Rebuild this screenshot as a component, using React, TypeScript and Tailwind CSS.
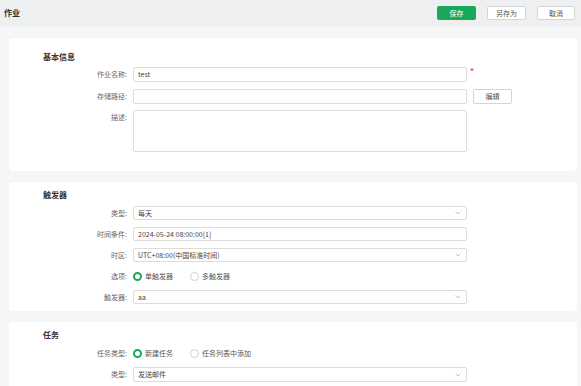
import React from "react";

const font = { fontFamily: '"Noto Sans CJK SC", "Noto Sans", sans-serif' };

const Chevron: React.FC = () => (
  <svg width="6" height="4" viewBox="0 0 6 4" className="absolute right-[5px] top-1/2 -translate-y-1/2">
    <path d="M0.5 0.5 L3 3 L5.5 0.5" fill="none" stroke="#b5b5b5" strokeWidth="0.8" />
  </svg>
);

const Field: React.FC<{ value?: string; select?: boolean; h?: string }> = ({ value, select, h = "h-[15px]" }) => (
  <div className={`relative shrink-0 w-[334px] ${h} border border-[#dcdcdc] rounded-[2px] bg-white flex items-center pl-[4px] text-[7px] text-[#444]`}>
    {value}
    {select && <Chevron />}
  </div>
);

const Row: React.FC<{ label: string; children: React.ReactNode; top?: boolean }> = ({ label, children, top }) => (
  <div className={`flex ${top ? "items-start" : "items-center"} gap-[6px]`}>
    <div className={`w-[118px] shrink-0 text-right text-[7px] text-[#666] ${top ? "pt-[2px]" : ""}`}>{label}</div>
    {children}
  </div>
);

const Radio: React.FC<{ checked?: boolean; label: string }> = ({ checked, label }) => (
  <div className="flex items-center gap-[3px] w-[57px] shrink-0">
    {checked ? (
      <span className="shrink-0 w-[9px] h-[9px] rounded-full border-2 border-[#1aa85a] bg-white" />
    ) : (
      <span className="shrink-0 w-[9px] h-[9px] rounded-full border border-[#d0d0d0] bg-white" />
    )}
    <span className="text-[7px] text-[#555] whitespace-nowrap">{label}</span>
  </div>
);

const Heading: React.FC<{ text: string }> = ({ text }) => (
  <div className="pl-[34px] text-[8px] font-semibold text-[#333] leading-[12px]">{text}</div>
);

export default function App() {
  return (
    <div style={font} className="w-[581px] h-[386px] overflow-hidden bg-[#f5f6f8]">
      {/* header */}
      <div className="h-[26px] bg-[#eeeff1] flex items-center justify-between pl-[4px] pr-[6px]">
        <span className="text-[8px] font-semibold text-[#333]">作业</span>
        <div className="flex gap-[11px]">
          <button className="w-[39px] h-[14px] rounded-[2px] bg-[#1aa85a] text-white text-[7px]">保存</button>
          <button className="w-[39px] h-[14px] rounded-[2px] bg-white border border-[#d4d4d4] text-[#555] text-[7px]">另存为</button>
          <button className="w-[38px] h-[14px] rounded-[2px] bg-white border border-[#d4d4d4] text-[#555] text-[7px]">取消</button>
        </div>
      </div>

      <div className="pl-[9px] pr-[4px] pt-[12px] flex flex-col gap-[11px]">
        {/* 基本信息 */}
        <div className="bg-white rounded-[3px] h-[133px] pt-[13px] flex flex-col">
          <Heading text="基本信息" />
          <div className="mt-[4px] flex flex-col gap-[7px]">
            <Row label="作业名称:">
              <Field value="test" />
              <span className="self-start -ml-[3px] text-[8px] leading-[8px] font-bold text-[#f03e3e]">*</span>
            </Row>
            <Row label="存储路径:">
              <Field />
              <button className="w-[39px] h-[15px] rounded-[2px] bg-white border border-[#d4d4d4] text-[#555] text-[7px]">编辑</button>
            </Row>
            <div className="-mt-[1px]">
              <Row label="描述:" top>
                <Field h="h-[42px]" />
              </Row>
            </div>
          </div>
        </div>

        {/* 触发器 */}
        <div className="bg-white rounded-[3px] h-[129px] pt-[7px] flex flex-col">
          <Heading text="触发器" />
          <div className="mt-[5px] flex flex-col gap-[7px]">
            <Row label="类型:">
              <Field value="每天" select h="h-[14px]" />
            </Row>
            <Row label="时间条件:">
              <Field value="2024-05-24 08:00:00[1]" h="h-[14px]" />
            </Row>
            <Row label="时区:">
              <Field value="UTC+08:00(中国标准时间)" select h="h-[14px]" />
            </Row>
            <Row label="选项:">
              <div className="h-[14px] flex items-center">
                <Radio checked label="单触发器" />
                <Radio label="多触发器" />
              </div>
            </Row>
            <Row label="触发器:">
              <Field value="aa" select h="h-[14px]" />
            </Row>
          </div>
        </div>

        {/* 任务 */}
        <div className="bg-white rounded-[3px] h-[80px] pt-[7px] flex flex-col">
          <Heading text="任务" />
          <div className="mt-[5px] flex flex-col gap-[7px]">
            <Row label="任务类型:">
              <div className="h-[14px] flex items-center">
                <Radio checked label="新建任务" />
                <Radio label="任务列表中添加" />
              </div>
            </Row>
            <Row label="类型:">
              <Field value="发送邮件" select />
            </Row>
          </div>
        </div>
      </div>
    </div>
  );
}
